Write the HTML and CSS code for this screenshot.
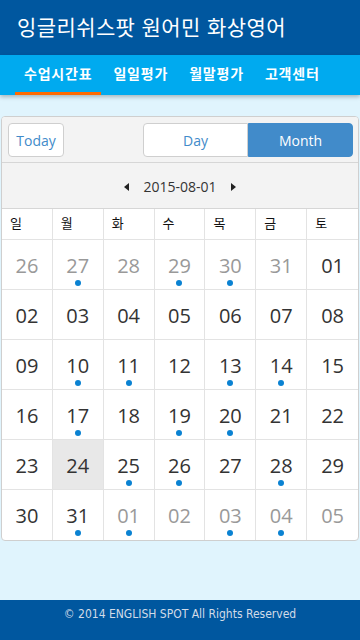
FILE: index.html
```html
<!DOCTYPE html>
<html lang="ko">
<head>
<meta charset="utf-8">
<link rel="stylesheet" href="styles.css">
</head>
<body>
<header class="top">
  <h1 class="title">잉글리쉬스팟 원어민 화상영어</h1>
</header>
<nav class="nav">
  <a class="nav-item active">수업시간표</a>
  <a class="nav-item">일일평가</a>
  <a class="nav-item">월말평가</a>
  <a class="nav-item">고객센터</a>
</nav>
<main class="main">
  <section class="cal">
    <div class="toolbar">
      <button class="btn today">Today</button>
      <div class="group">
        <button class="btn seg">Day</button>
        <button class="btn seg on">Month</button>
      </div>
    </div>
    <div class="datebar">
      <span class="arrow left"></span>
      <span class="date">2015-08-01</span>
      <span class="arrow right"></span>
    </div>
    <div class="grid">
      <div class="wd">일</div><div class="wd">월</div><div class="wd">화</div><div class="wd">수</div><div class="wd">목</div><div class="wd">금</div><div class="wd">토</div>

      <div class="d out">26</div><div class="d out dot">27</div><div class="d out">28</div><div class="d out dot">29</div><div class="d out dot">30</div><div class="d out">31</div><div class="d">01</div>
      <div class="d">02</div><div class="d">03</div><div class="d">04</div><div class="d">05</div><div class="d">06</div><div class="d">07</div><div class="d">08</div>
      <div class="d">09</div><div class="d dot">10</div><div class="d dot">11</div><div class="d">12</div><div class="d dot">13</div><div class="d dot">14</div><div class="d">15</div>
      <div class="d">16</div><div class="d dot">17</div><div class="d">18</div><div class="d dot">19</div><div class="d dot">20</div><div class="d">21</div><div class="d">22</div>
      <div class="d">23</div><div class="d sel">24</div><div class="d dot">25</div><div class="d dot">26</div><div class="d">27</div><div class="d dot">28</div><div class="d">29</div>
      <div class="d">30</div><div class="d dot">31</div><div class="d out dot">01</div><div class="d out">02</div><div class="d out dot">03</div><div class="d out dot">04</div><div class="d out">05</div>
    </div>
  </section>
</main>
<footer class="foot">© 2014 ENGLISH SPOT All Rights Reserved</footer>
</body>
</html>
```
FILE: styles.css
```css
* { box-sizing: border-box; }
html, body { margin: 0; padding: 0; }
body {
  height: 640px;
  display: flex;
  flex-direction: column;
  background: #e0f4fd;
  font-family: "Open Sans", "Noto Sans CJK KR", sans-serif;
}
.top {
  height: 55px;
  background: #00579f;
  display: flex;
  align-items: center;
  padding: 0 0 4px 17px;
}
.title {
  margin: 0;
  font-family: "Noto Sans CJK KR", sans-serif;
  font-weight: 400;
  font-size: 21px;
  color: #fff;
  letter-spacing: 0.4px;
}
.nav {
  height: 40px;
  background: #00aaef;
  display: flex;
  gap: 3px;
  padding-left: 15px;
  box-shadow: 0 2px 4px rgba(0,0,0,0.25);
  position: relative;
}
.nav-item {
  display: flex;
  align-items: center;
  padding: 0 9px 2px;
  border-bottom: 3px solid transparent;
  font-family: "Noto Sans CJK KR", sans-serif;
  font-weight: 700;
  font-size: 14px;
  letter-spacing: 0.8px;
  color: #fff;
}
.nav-item.active { border-bottom-color: #ff6a00; }
.main { padding: 21px 1px 0; }
.cal {
  border: 1px solid #cfcfcf;
  border-radius: 4px;
  background: #fff;
  overflow: hidden;
}
.toolbar {
  background: #f3f3f3;
  height: 46px;
  padding: 6px 5px 0 6px;
  display: flex;
  justify-content: space-between;
  align-items: flex-start;
  border-bottom: 1px solid #d6d6d6;
}
.btn {
  height: 34px;
  border: 1px solid #cfcfcf;
  background: #fff;
  color: #428bca;
  font-family: "Open Sans", sans-serif;
  font-size: 14px;
  padding: 0;
  margin: 0;
}
.today { width: 56px; border-radius: 4px; }
.group { display: flex; }
.seg { width: 105px; }
.seg:first-child { border-radius: 4px 0 0 4px; }
.seg.on { background: #418bca; border-color: #418bca; color: #fff; border-radius: 0 4px 4px 0; }
.datebar {
  height: 45px;
  background: #f3f3f3;
  display: flex;
  align-items: center;
  justify-content: center;
  gap: 14px;
  font-size: 14px;
  color: #333;
  padding-top: 2px;
}
.arrow { width: 0; height: 0; border-top: 4px solid transparent; border-bottom: 4px solid transparent; }
.arrow.left { border-right: 5px solid #222; }
.arrow.right { border-left: 5px solid #222; }
.grid {
  display: grid;
  grid-template-columns: repeat(7, 1fr);
  border-top: 1px solid #d6d6d6;
}
.wd {
  height: 31px;
  padding: 4px 0 0 8px;
  font-family: "Noto Sans CJK KR", sans-serif;
  font-size: 13px;
  color: #111;
  border-right: 1px solid #e3e3e3;
  border-bottom: 1px solid #e3e3e3;
}
.d {
  height: 50px;
  display: flex;
  justify-content: center;
  padding-top: 12px;
  font-size: 20px;
  line-height: 27px;
  color: #333;
  border-right: 1px solid #e3e3e3;
  border-bottom: 1px solid #e3e3e3;
  position: relative;
}
.wd:nth-child(7n), .d:nth-child(7n) { border-right: none; }
.grid .d:nth-last-child(-n+7) { border-bottom: none; }
.d.out { color: #999; }
.d.sel { background: #e8e8e8; }
.d.dot::after {
  content: "";
  position: absolute;
  left: 50%;
  top: 40px;
  width: 6px;
  height: 6px;
  margin-left: -3px;
  border-radius: 50%;
  background: #0a82d2;
}
.foot {
  margin-top: auto;
  height: 40px;
  background: #00579f;
  color: #d2dbe8;
  font-family: "DejaVu Sans Condensed", "DejaVu Sans", sans-serif;
  font-size: 12px;
  display: flex;
  align-items: center;
  justify-content: center;
  padding-bottom: 13px;
}
```
